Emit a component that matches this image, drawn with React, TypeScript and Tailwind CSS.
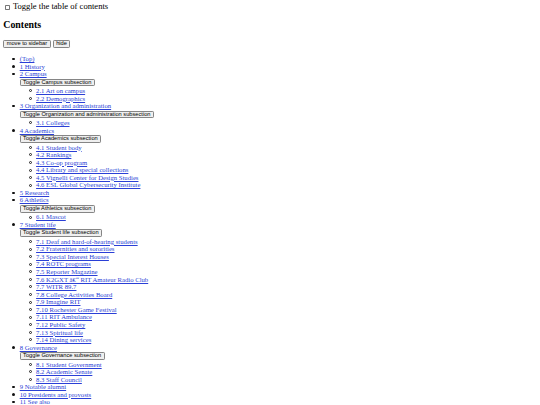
type Entry = { num: string; title: string; children?: Entry[] };

const sections: Entry[] = [
  { num: "", title: "(Top)" },
  { num: "1", title: "History" },
  {
    num: "2",
    title: "Campus",
    children: [
      { num: "2.1", title: "Art on campus" },
      { num: "2.2", title: "Demographics" },
    ],
  },
  {
    num: "3",
    title: "Organization and administration",
    children: [{ num: "3.1", title: "Colleges" }],
  },
  {
    num: "4",
    title: "Academics",
    children: [
      { num: "4.1", title: "Student body" },
      { num: "4.2", title: "Rankings" },
      { num: "4.3", title: "Co-op program" },
      { num: "4.4", title: "Library and special collections" },
      { num: "4.5", title: "Vignelli Center for Design Studies" },
      { num: "4.6", title: "ESL Global Cybersecurity Institute" },
    ],
  },
  { num: "5", title: "Research" },
  {
    num: "6",
    title: "Athletics",
    children: [{ num: "6.1", title: "Mascot" }],
  },
  {
    num: "7",
    title: "Student life",
    children: [
      { num: "7.1", title: "Deaf and hard-of-hearing students" },
      { num: "7.2", title: "Fraternities and sororities" },
      { num: "7.3", title: "Special Interest Houses" },
      { num: "7.4", title: "ROTC programs" },
      { num: "7.5", title: "Reporter Magazine" },
      { num: "7.6", title: "K2GXT â€“ RIT Amateur Radio Club" },
      { num: "7.7", title: "WITR 89.7" },
      { num: "7.8", title: "College Activities Board" },
      { num: "7.9", title: "Imagine RIT" },
      { num: "7.10", title: "Rochester Game Festival" },
      { num: "7.11", title: "RIT Ambulance" },
      { num: "7.12", title: "Public Safety" },
      { num: "7.13", title: "Spiritual life" },
      { num: "7.14", title: "Dining services" },
    ],
  },
  {
    num: "8",
    title: "Governance",
    children: [
      { num: "8.1", title: "Student Government" },
      { num: "8.2", title: "Academic Senate" },
      { num: "8.3", title: "Staff Council" },
    ],
  },
  { num: "9", title: "Notable alumni" },
  { num: "10", title: "Presidents and provosts" },
  { num: "11", title: "See also" },
];

const btn =
  "block w-fit h-[7.8px] px-[2.4px] bg-[#efefef] border-[0.8px] border-[#858585] rounded-[1.2px] font-['Liberation_Sans',Arial,sans-serif] text-[5.7px] leading-none text-black";

// drawn bullets: filled dot for sections, hollow ring for subsections
function Bullet({ hollow }: { hollow?: boolean }) {
  return (
    <span className="-ml-[7.4px] inline-flex w-[7.4px] items-center">
      {hollow ? (
        <span className="h-[3px] w-[3px] rounded-full border-[0.7px] border-[#222]" />
      ) : (
        <span className="h-[2.4px] w-[2.4px] rounded-full bg-[#111]" />
      )}
    </span>
  );
}

function TocLink({ item }: { item: Entry }) {
  return (
    <a href={`#${item.title}`} className="text-[#2a3fd6] underline decoration-[0.6px] underline-offset-[1px]">
      {item.num ? `${item.num} ${item.title}` : item.title}
    </a>
  );
}

export default function App() {
  return (
    <div className="min-h-[405px] bg-white p-[3.3px] font-['Liberation_Serif',serif] text-[6.7px] leading-[7.56px] text-black">
      <div className="flex h-[7.8px] items-center">
        <input
          type="checkbox"
          className="ml-[1.8px] mr-[2.4px] h-[5.4px] w-[5.4px] appearance-none rounded-[0.8px] border-[0.7px] border-[#777] bg-white"
        />
        <label className="text-[8.6px]">Toggle the table of contents</label>
      </div>

      <h2 className="mt-[8.2px] mb-[9.2px] text-[9.9px] leading-[11.3px] font-bold">Contents</h2>

      <div className="flex gap-[2.2px]">
        <button type="button" className={btn}>move to sidebar</button>
        <button type="button" className={btn}>hide</button>
      </div>

      <ul className="mt-[7.6px] pl-[16.4px]">
        {sections.map((s) => (
          <li key={s.title}>
            <div className="flex items-center">
              <Bullet />
              <TocLink item={s} />
            </div>
            {s.children ? (
              <>
                <button type="button" className={`${btn} my-[0.75px]`}>
                  Toggle {s.title} subsection
                </button>
                <ul className="pl-[16.4px]">
                  {s.children.map((c) => (
                    <li key={c.num} className="flex items-center">
                      <Bullet hollow />
                      <TocLink item={c} />
                    </li>
                  ))}
                </ul>
              </>
            ) : null}
          </li>
        ))}
      </ul>
    </div>
  );
}
